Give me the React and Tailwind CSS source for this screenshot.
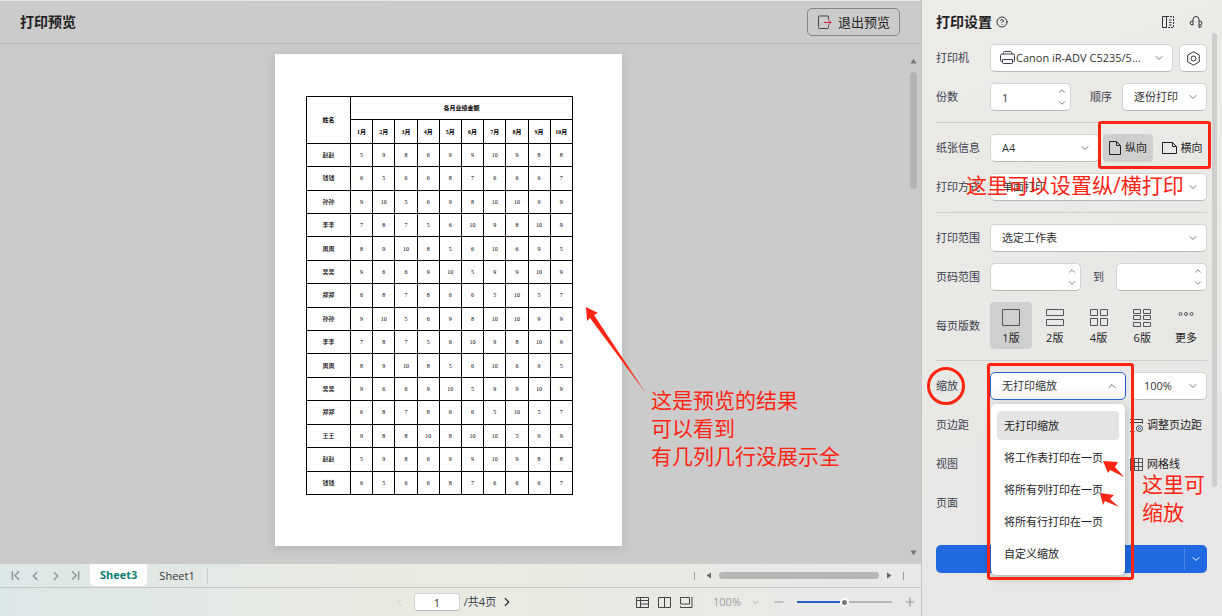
import React, { useState } from 'react';
import { ChevronDown, ChevronUp, ChevronLeft, ChevronRight, ChevronFirst, ChevronLast, CircleHelp, Minus, Plus } from 'lucide-react';

const MONTHS = ['1月', '2月', '3月', '4月', '5月', '6月', '7月', '8月', '9月', '10月'];

const ROWS = [
    ['赵赵', 5, 9, 8, 6, 9, 9, 10, 9, 8, 8],
    ['钱钱', 6, 5, 6, 6, 8, 7, 6, 6, 6, 7],
    ['孙孙', 9, 10, 5, 6, 9, 8, 10, 10, 9, 9],
    ['李李', 7, 8, 7, 5, 6, 10, 9, 8, 10, 9],
    ['周周', 8, 9, 10, 8, 5, 6, 10, 6, 9, 5],
    ['吴吴', 9, 6, 6, 9, 10, 5, 9, 9, 10, 9],
    ['郑郑', 6, 8, 7, 8, 6, 6, 5, 10, 5, 7],
    ['孙孙', 9, 10, 5, 6, 9, 8, 10, 10, 9, 9],
    ['李李', 7, 8, 7, 5, 6, 10, 9, 8, 10, 9],
    ['周周', 8, 9, 10, 8, 5, 6, 10, 6, 9, 5],
    ['吴吴', 9, 6, 6, 9, 10, 5, 9, 9, 10, 9],
    ['郑郑', 6, 8, 7, 8, 6, 6, 5, 10, 5, 7],
    ['王王', 9, 8, 8, 10, 8, 10, 10, 5, 9, 9],
    ['赵赵', 5, 9, 8, 6, 9, 9, 10, 9, 8, 8],
    ['钱钱', 6, 5, 6, 6, 8, 7, 6, 6, 6, 7],
];

const SCALES = ['无打印缩放', '将工作表打印在一页', '将所有列打印在一页', '将所有行打印在一页', '自定义缩放'];

const FIELD = 'h-7 w-full appearance-none rounded-[5px] border text-[#333] outline-none';
const FIELD_IDLE = 'border-[#d2d2d2] border-b-[#b8b8b8] bg-white';
const FIELD_OPEN = 'border-[#2b62c9] bg-linear-to-b from-white from-50% to-[#f1f1f1]';

// Form building blocks
const Row = ({ label, htmlFor, children }) => (
    <div className="flex min-h-7 items-center">
        <label htmlFor={htmlFor} className="w-[54px] shrink-0 text-[#3a4050]">{label}</label>
        <div className="flex min-w-0 flex-1 items-center">{children}</div>
    </div>
);

const Divider = () => <hr className="h-px shrink-0 border-0 bg-[#cdcdcb]" />;

const Select = ({ id, label, options, className = '', pad = 'pl-[11px]', icon, open }) => (
    <div className={`relative ${className}`}>
        <select id={id} aria-label={label} className={`${FIELD} ${open ? FIELD_OPEN : FIELD_IDLE} ${pad} pr-6 text-ellipsis`}>
            {options.map((o) => <option key={o}>{o}</option>)}
        </select>
        {icon}
        {open
            ? <ChevronUp size={12} strokeWidth={2} className="pointer-events-none absolute top-2 right-2 text-[#777]" />
            : <ChevronDown size={12} strokeWidth={2} className="pointer-events-none absolute top-2 right-2 text-[#777]" />}
    </div>
);

const Stepper = ({ id, label, value, className }) => (
    <div className={`relative ${className}`}>
        <input id={id} aria-label={label} type="text" inputMode="numeric" defaultValue={value} className={`${FIELD} ${FIELD_IDLE} pr-5 pl-[11px]`} />
        <div className="absolute inset-y-[2px] right-1 flex flex-col justify-between text-[#666]">
            <button type="button" aria-label="增加" className="flex h-3 items-center"><ChevronUp size={10} strokeWidth={2} /></button>
            <button type="button" aria-label="减少" className="flex h-3 items-center"><ChevronDown size={10} strokeWidth={2} /></button>
        </div>
    </div>
);

// Icons
const Svg = ({ w = 16, h = 16, children, className = '' }) => (
    <svg width={w} height={h} viewBox={`0 0 ${w} ${h}`} fill="none" stroke="currentColor" className={`shrink-0 ${className}`}>
        {children}
    </svg>
);

const ExitIcon = () => (
    <Svg w={15} h={15}>
        <path d="M11.5 4.500V2a1 1 0 0 0-1-1h-8a1 1 0 0 0-1 1v10.500a1 1 0 0 0 1 1h8a1 1 0 0 0 1-1V10.500" stroke="#444" />
        <path d="M7 7.500h7M11.500 5l2.500 2.500-2.500 2.500" stroke="#c2284b" />
    </Svg>
);

const PrinterIcon = () => (
    <Svg w={15} h={15} className="pointer-events-none absolute top-[6px] left-2.5 text-[#3a4050]">
        <path d="M3.500 4V2.500a1 1 0 0 1 1-1h6a1 1 0 0 1 1 1V4M2.500 11.500h-1a1 1 0 0 1-1-1v-5A1.500 1.500 0 0 1 2 4h11a1.500 1.500 0 0 1 1.500 1.500v5a1 1 0 0 1-1 1h-1M2.500 9.500h10v3a1 1 0 0 1-1 1h-8a1 1 0 0 1-1-1z" />
    </Svg>
);

const GearIcon = () => (
    <Svg w={15} h={15}>
        <path d="M7.500.8l5.800 3.300v6.800l-5.800 3.300-5.800-3.300V4.100z" />
        <circle cx="7.500" cy="7.500" r="2.500" />
    </Svg>
);

const PanelIcon = () => (
    <Svg w={14} h={14}>
        <path d="M5.500 1v12M5.500 1.500h-4v11h4M8 5h2.500M8 7.500h2.500M8 10h2.500" />
        <path d="M6 1.500h6.500v11H6" strokeDasharray="2 1" />
    </Svg>
);

const HeadsetIcon = () => (
    <Svg w={14} h={14}>
        <path d="M4 10V4.500a3 3 0 0 1 6 0V12.500q2.500 0 2.500-2M4 10Q1 10 1 8t3-2M10 6q3 0 3 2t-3 2" />
    </Svg>
);

const PortraitIcon = () => (
    <Svg w={12} h={16}><path d="M.5 1.500h7l4 4v9H.5zM7.500 1.500v4h4" /></Svg>
);

const LandscapeIcon = () => (
    <Svg w={15} h={12}><path d="M.5.500h10l4 4v7H.5zM10.500.500v4h4" /></Svg>
);

const LAYOUTS = [
    { label: '1版', icon: <path d="M1.500 2.500h17v16h-17z" /> },
    { label: '2版', icon: <path d="M1.500 2.500h17v6h-17zM1.500 12.500h17v6h-17z" /> },
    { label: '4版', icon: <path d="M1.500 2.500h7v6h-7zM11.500 2.500h7v6h-7zM1.500 11.500h7v7h-7zM11.500 11.500h7v7h-7z" /> },
    { label: '6版', icon: <path d="M1.500 2.500h7v4h-7zM11.500 2.500h7v4h-7zM1.500 8.500h7v4h-7zM11.500 8.500h7v4h-7zM1.500 15.500h7v4h-7zM11.500 15.500h7v4h-7z" /> },
    { label: '更多', icon: <g><circle cx="4.500" cy="7" r="1.500" /><circle cx="10" cy="7" r="1.500" /><circle cx="15.500" cy="7" r="1.500" /></g> },
];

const PaperTable = () => (
    <table className="h-[399px] w-[267px] table-fixed border-collapse text-center font-['Liberation_Serif','Noto_Sans_CJK_SC',serif] text-[6px] leading-[8px] text-black">
        <colgroup>
            <col className="w-[44px]" />
            {MONTHS.map((m) => <col key={m} />)}
        </colgroup>
        <tbody>
            <tr className="h-[23px]">
                <th rowSpan={2} className="border border-black p-0">姓名</th>
                <th colSpan={10} className="border border-black p-0">各月业绩金额</th>
            </tr>
            <tr className="h-[23px]">
                {MONTHS.map((m) => <th key={m} className="border border-black p-0">{m}</th>)}
            </tr>
            {ROWS.map((row, i) => (
                <tr key={i} className="h-[23px]">
                    {row.map((cell, j) => <td key={j} className="border border-black p-0 font-medium">{cell}</td>)}
                </tr>
            ))}
        </tbody>
    </table>
);

const Preview = () => (
    <main className="flex min-w-0 flex-1 flex-col">
        <header className="mt-px flex h-[43px] items-center justify-between border-b border-[#b7b7b7] bg-[#cbcbcb] pr-[21px] pl-5">
            <h1 className="text-[14px] leading-5 font-bold text-[#222]">打印预览</h1>
            <button type="button" className="flex h-7 items-center gap-1.5 rounded-[5px] border border-[#858585] px-[9px] text-[13px] leading-5 text-[#222]">
                <ExitIcon />退出预览
            </button>
        </header>

        <section className="flex flex-1 bg-[#cbcbcb]">
            <div className="flex flex-1 justify-center pt-2.5 pb-[18px]">
                <div className="relative h-[492px] w-[347px] bg-white pt-[42px] pl-[31px] shadow-[0_2px_8px_2px_rgba(0,0,0,0.08)]">
                    <PaperTable />
                    <svg width="64" height="90" viewBox="0 0 64 90" className="absolute top-[252px] left-[310px]" fill="#ff2512">
                        <path d="M1 1l12 6-4 2 52 78.500L5 12l-3 3z" />
                    </svg>
                    <p className="absolute top-[332px] left-[376px] text-[21px] leading-7 whitespace-nowrap text-[#ff2512]">
                        这是预览的结果<br />可以看到<br />有几列几行没展示全
                    </p>
                </div>
            </div>
            <div className="flex w-6 flex-col items-end justify-between pr-1">
                <div className="flex flex-1 flex-col items-center gap-2 pt-3.5">
                    <Svg w={7} h={6}><path d="M3.500.500L6.500 5.500h-6z" fill="#777" stroke="none" /></Svg>
                    <div className="h-[117px] w-[7px] rounded-full bg-[#b4b4b4]" />
                </div>
                <Svg w={7} h={6} className="mb-2"><path d="M3.500 5.500L.500.500h6z" fill="#777" stroke="none" /></Svg>
            </div>
        </section>

        <nav className="flex h-6 items-center border-b border-[#c8c8c6] text-[11px] leading-4">
            <div className="flex w-[90px] items-center gap-[5px] pl-2 text-[#929696]">
                <button type="button" aria-label="第一张"><ChevronFirst size={15} strokeWidth={2.5} /></button>
                <button type="button" aria-label="上一张"><ChevronLeft size={14} strokeWidth={2.5} /></button>
                <button type="button" aria-label="下一张" className="ml-[2px]"><ChevronRight size={14} strokeWidth={2.5} /></button>
                <button type="button" aria-label="最后一张"><ChevronLast size={15} strokeWidth={2.5} /></button>
            </div>
            <button type="button" className="h-[22px] self-start rounded-b-[5px] bg-white px-2.5 font-bold text-[#0c8072]">Sheet3</button>
            <button type="button" className="px-3 text-[#333]">Sheet1</button>
            <div className="h-4 w-px bg-[#c9cdc8]" />
            <div className="ml-auto flex items-center gap-[11px] pr-[17px]">
                <div className="h-2 w-px bg-[#999]" />
                <div className="flex items-center gap-[7px]">
                    <Svg w={6} h={7}><path d="M5 .500v6L.500 3.500z" fill="#666" stroke="none" /></Svg>
                    <div className="h-[7px] w-[160px] rounded-full bg-[#b5b5b5]" />
                    <Svg w={6} h={7}><path d="M1 .500v6l4.500-3z" fill="#666" stroke="none" /></Svg>
                </div>
                <div className="h-2 w-px bg-[#999]" />
            </div>
        </nav>

        <footer className="grid h-7 grid-cols-[1fr_auto_1fr] items-center pr-1 text-[11px] leading-4">
            <div />
            <div className="flex items-center gap-1 pr-2.5">
                <button type="button" aria-label="上一页" className="mr-1 text-[#c5c5c0]"><ChevronLeft size={13} strokeWidth={1.5} /></button>
                <input type="text" aria-label="页码" defaultValue="1" className="h-[18px] w-[46px] rounded-[3px] border border-[#d2d2d2] border-b-[#bdbdbd] bg-white text-center text-[#333]" />
                <span className="text-[#333a44]">/共4页</span>
                <button type="button" aria-label="下一页" className="text-[#333]"><ChevronRight size={14} strokeWidth={2} /></button>
            </div>
            <div className="flex items-center justify-end text-[#444]">
                <div className="flex gap-[9px]">
                    <button type="button" aria-label="普通视图"><Svg w={13} h={13}><path d="M.500 1.500h12v10H.500zM.500 4.500h12M4.500 1.500v10M4.500 8h8" /></Svg></button>
                    <button type="button" aria-label="分页视图"><Svg w={13} h={13}><path d="M.500 1.500h12v10H.500zM6.500 1.500v10" /></Svg></button>
                    <button type="button" aria-label="页面布局"><Svg w={13} h={13}><path d="M.500 1.500h9v6.500H.500zM12 1v10.500H.500V10" /></Svg></button>
                </div>
                <button type="button" className="ml-5 flex items-center gap-2.5 text-[#a0a0a0]">
                    100%<ChevronDown size={9} strokeWidth={2.5} />
                </button>
                <button type="button" aria-label="缩小" className="ml-[12px] text-[#999]"><Minus size={14} strokeWidth={2} /></button>
                <input
                    type="range"
                    aria-label="显示比例"
                    defaultValue="50"
                    className="mx-[11px] h-[2px] w-[95px] appearance-none bg-linear-to-r from-[#2463c4] from-50% to-[#b5b5b5] to-50% [&::-webkit-slider-thumb]:h-[9px] [&::-webkit-slider-thumb]:w-[9px] [&::-webkit-slider-thumb]:appearance-none [&::-webkit-slider-thumb]:rounded-full [&::-webkit-slider-thumb]:border-2 [&::-webkit-slider-thumb]:border-white [&::-webkit-slider-thumb]:bg-[#777]"
                />
                <button type="button" aria-label="放大" className="text-[#999]"><Plus size={14} strokeWidth={2} /></button>
            </div>
        </footer>
    </main>
);

const ScaleMenu = ({ value, onPick }) => (
    <ul className="absolute top-8 left-px z-10 flex w-[134px] flex-col gap-[3px] rounded-[5px] bg-white px-1.5 py-[7px] shadow-[0_2px_8px_rgba(0,0,0,0.25)]">
        {SCALES.map((s) => (
            <li key={s}>
                <button
                    type="button"
                    onClick={() => onPick(s)}
                    className={`h-[29px] w-full rounded-[4px] pl-[7px] text-left whitespace-nowrap text-[#222] ${s === value ? 'bg-[#e4e4e4]' : ''}`}
                >
                    {s}
                </button>
            </li>
        ))}
    </ul>
);

const Settings = () => {
    const [scale, setScale] = useState(SCALES[0]);

    return (
        <aside className="relative w-[301px] shrink-0 border-l border-[#c4c4c4] bg-linear-160 from-[#ecebe7] via-[#e8e8e4] to-[#e8e6e6] pr-[15px] pl-3.5 text-[11px] leading-4">
            <header className="flex h-11 items-center text-[#333]">
                <h2 className="text-[14px] leading-5 font-bold text-[#222]">打印设置</h2>
                <CircleHelp size={12} strokeWidth={2} className="ml-1" />
                <button type="button" aria-label="面板" className="ml-auto"><PanelIcon /></button>
                <button type="button" aria-label="客服" className="mr-1 ml-3.5"><HeadsetIcon /></button>
            </header>

            <form className="flex flex-col gap-[11px]">
                <Row label="打印机" htmlFor="printer">
                    <Select id="printer" options={['Canon iR-ADV C5235/5...']} className="min-w-0 flex-1" pad="pl-[25px]" icon={<PrinterIcon />} />
                    <button type="button" aria-label="打印机属性" className="ml-1.5 flex size-7 items-center justify-center rounded-[5px] border border-[#d2d2d2] border-b-[#b8b8b8] bg-white text-[#333]">
                        <GearIcon />
                    </button>
                </Row>
                <Row label="份数" htmlFor="copies">
                    <Stepper id="copies" value="1" className="w-[81px]" />
                    <label htmlFor="order" className="flex-1 text-right text-[#3a4050]">顺序</label>
                    <Select id="order" options={['逐份打印']} className="ml-2.5 w-[85px]" />
                </Row>
                <Divider />
                <Row label="纸张信息" htmlFor="paper">
                    <Select id="paper" options={['A4']} className="min-w-0 flex-1" />
                    <button type="button" className="ml-1 flex h-7 w-[50px] items-center justify-center gap-1 rounded-[4px] bg-[#cfcfcd] text-[#222]">
                        <PortraitIcon />纵向
                    </button>
                    <button type="button" className="ml-1 flex h-7 w-[50px] items-center justify-center gap-1 text-[#222]">
                        <LandscapeIcon />横向
                    </button>
                </Row>
                <Row label="打印方式" htmlFor="mode">
                    <Select id="mode" options={['单面打印']} className="flex-1" />
                </Row>
                <Divider />
                <Row label="打印范围" htmlFor="range">
                    <Select id="range" options={['选定工作表']} className="flex-1" />
                </Row>
                <Row label="页码范围" htmlFor="from">
                    <Stepper id="from" className="w-[91px]" />
                    <label htmlFor="to" className="flex-1 text-center text-[#3a4050]">到</label>
                    <Stepper id="to" className="w-[91px]" />
                </Row>
                <Row label="每页版数">
                    <div className="flex flex-1 justify-between">
                        {LAYOUTS.map((l, i) => (
                            <button key={l.label} type="button" className={`flex h-[47px] w-[42px] flex-col items-center gap-[2px] rounded-[4px] pt-[5px] text-[#222] ${i === 0 ? 'bg-[#cfcfcd]' : ''}`}>
                                <Svg w={20} h={21} className="text-[#555]">{l.icon}</Svg>
                                {l.label}
                            </button>
                        ))}
                    </div>
                </Row>
                <Divider />
                <Row label="缩放" htmlFor="scale">
                    <div className="relative w-[136px]">
                        <Select id="scale" options={[scale]} open />
                        <ScaleMenu value={scale} onPick={setScale} />
                    </div>
                    <Select label="缩放比例" options={['100%']} className="ml-1.5 flex-1" />
                </Row>
                <Row label="页边距">
                    <button type="button" className="ml-[139px] flex items-center gap-[3px] whitespace-nowrap text-[#222]">
                        <Svg w={15} h={15}>
                            <path d="M1 1.500h12.500v4M1 4.500h12.500M2.500 4.500v9M1 13.500h4.500" stroke="#444" />
                            <circle cx="10.500" cy="10.500" r="3" stroke="#444" />
                            <circle cx="10.500" cy="10.500" r="1" stroke="#2b62c9" />
                        </Svg>
                        调整页边距
                    </button>
                </Row>
                <Row label="视图">
                    <button type="button" className="ml-[139px] flex items-center gap-[3px] whitespace-nowrap text-[#222]">
                        <Svg w={15} h={15}><path d="M1.500 1.500h12v12h-12zM1.500 5.500h12M1.500 9.500h12M5.500 1.500v12M9.500 1.500v12" stroke="#555" /></Svg>
                        网格线
                    </button>
                </Row>
                <Row label="页面" />
            </form>

            <div className="mt-7 flex h-7 items-center rounded-[5px] bg-[#2069e0] text-white">
                <button type="button" aria-label="打印" className="h-full flex-1" />
                <div className="h-[22px] w-px bg-[#4a86ea]" />
                <button type="button" aria-label="更多打印选项" className="flex h-full w-[22px] items-center justify-center"><ChevronDown size={12} strokeWidth={2} /></button>
            </div>

            <div className="absolute top-[33px] right-[5px] h-[454px] w-[5px] rounded-full bg-[#cfcecd]" />

            {/* Red markup over the form */}
            <div className="pointer-events-none absolute inset-0 z-20 text-[21px] leading-7 whitespace-nowrap text-[#ff2512]">
                <div className="absolute top-[121px] right-[11px] h-12 w-[113px] rounded-[3px] border-3 border-[#ff2512]" />
                <p className="absolute top-[171px] left-[44px]">这里可以设置纵/横打印</p>
                <div className="absolute top-[367px] left-[5px] size-[38px] rounded-full border-3 border-[#ff2512]" />
                <div className="absolute top-[363px] left-[65px] h-[217px] w-[147px] rounded-[3px] border-3 border-[#ff2512]" />
                <svg width="26" height="50" viewBox="0 0 26 50" className="absolute top-[460px] left-[177px]" fill="#ff2512">
                    <path d="M4 1l15 1-3 5 9 10-14-7-2 3zM1 33l14 2-4 4 9 8-14-6-2 4z" />
                </svg>
                <p className="absolute top-[470px] left-[220px]">这里可<br />缩放</p>
            </div>
        </aside>
    );
};

export default function App() {
    return (
        <div className="flex min-h-screen bg-linear-to-r from-[#dce7e7] via-[#e9eae0] via-35% to-[#e9e8e8] to-75% font-['Open_Sans','Noto_Sans_CJK_SC',sans-serif]">
            <Preview />
            <Settings />
        </div>
    );
}
